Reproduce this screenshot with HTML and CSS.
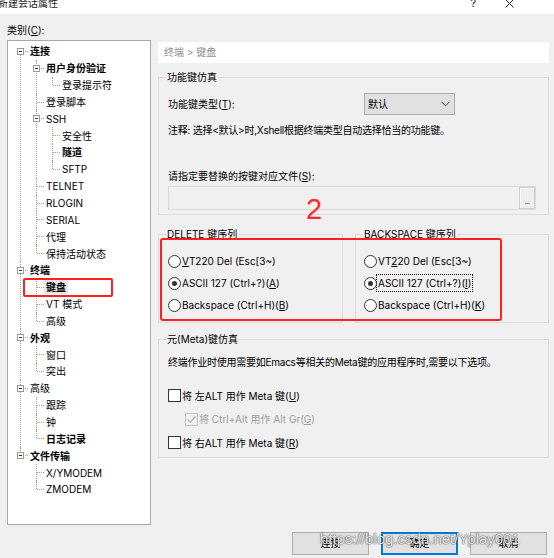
FILE: index.html
```html
<!DOCTYPE html>
<html lang="zh-CN">
<head>
<meta charset="utf-8">
<title>新建会话属性</title>
<link rel="stylesheet" href="styles.css">
</head>
<body>
<div class="titlebar">
  <span class="title">新建会话属性</span>
  <div class="ctrls">
    <span class="help">?</span>
    <svg class="close" width="9" height="9" viewBox="0 0 9 9"><path d="M0.5 0.5 L8.5 8.5 M8.5 0.5 L0.5 8.5" stroke="#222" stroke-width="1" fill="none"/></svg>
  </div>
</div>
<div class="main">
  <div class="leftcol">
    <div class="cat-label">类别(<u>C</u>):</div>
    <div class="tree">
      <ul class="root">
        <li><div class="row"><span class="box"></span><span class="lbl b">连接</span></div>
          <ul>
            <li><div class="row"><span class="box"></span><span class="lbl b">用户身份验证</span></div>
              <ul><li><div class="row"><span class="lbl">登录提示符</span></div></li></ul>
            </li>
            <li><div class="row"><span class="lbl">登录脚本</span></div></li>
            <li><div class="row"><span class="box"></span><span class="lbl">SSH</span></div>
              <ul>
                <li><div class="row"><span class="lbl">安全性</span></div></li>
                <li><div class="row"><span class="lbl b">隧道</span></div></li>
                <li><div class="row"><span class="lbl">SFTP</span></div></li>
              </ul>
            </li>
            <li><div class="row"><span class="lbl">TELNET</span></div></li>
            <li><div class="row"><span class="lbl">RLOGIN</span></div></li>
            <li><div class="row"><span class="lbl">SERIAL</span></div></li>
            <li><div class="row"><span class="lbl">代理</span></div></li>
            <li><div class="row"><span class="lbl">保持活动状态</span></div></li>
          </ul>
        </li>
        <li><div class="row"><span class="box"></span><span class="lbl b">终端</span></div>
          <ul>
            <li><div class="row"><span class="lbl b sel">键盘</span></div></li>
            <li><div class="row"><span class="lbl">VT 模式</span></div></li>
            <li><div class="row"><span class="lbl">高级</span></div></li>
          </ul>
        </li>
        <li><div class="row"><span class="box"></span><span class="lbl b">外观</span></div>
          <ul>
            <li><div class="row"><span class="lbl">窗口</span></div></li>
            <li><div class="row"><span class="lbl">突出</span></div></li>
          </ul>
        </li>
        <li><div class="row"><span class="box"></span><span class="lbl">高级</span></div>
          <ul>
            <li><div class="row"><span class="lbl">跟踪</span></div></li>
            <li><div class="row"><span class="lbl">钟</span></div></li>
            <li><div class="row"><span class="lbl b">日志记录</span></div></li>
          </ul>
        </li>
        <li><div class="row"><span class="box"></span><span class="lbl b">文件传输</span></div>
          <ul>
            <li><div class="row"><span class="lbl">X/YMODEM</span></div></li>
            <li><div class="row"><span class="lbl">ZMODEM</span></div></li>
          </ul>
        </li>
      </ul>
      <div class="mark-tree"></div>
    </div>
  </div>

  <div class="rightcol">
    <div class="crumb">终端 &gt; 键盘</div>

    <div class="group g-func">
      <span class="group-title">功能键仿真</span>
      <div class="type-row">
        <span class="type-label">功能键类型(<u>T</u>):</span>
        <div class="select"><span>默认</span>
          <svg width="9" height="6" viewBox="0 0 9 6"><path d="M0.5 0.8 L4.5 4.8 L8.5 0.8" stroke="#444" stroke-width="1" fill="none"/></svg>
        </div>
      </div>
      <div class="note">注释: 选择&lt;默认&gt;时,Xshell根据终端类型自动选择恰当的功能键。</div>
      <div class="file-label">请指定要替换的按键对应文件(<u>S</u>):</div>
      <div class="file-input"><span class="browse">...</span></div>
    </div>

    <div class="group-row">
      <div class="group g-del">
        <span class="group-title">DELETE 键序列</span>
        <div class="opt"><span class="radio"></span><span><u>V</u>T220 Del (Esc[3~)</span></div>
        <div class="opt"><span class="radio on"></span><span>ASCII 127 (Ctrl+?)(<u>A</u>)</span></div>
        <div class="opt"><span class="radio"></span><span>Backspace (Ctrl+H)(<u>B</u>)</span></div>
      </div>
      <div class="group g-bs">
        <span class="group-title">BACKSPACE 键序列</span>
        <div class="opt"><span class="radio"></span><span>VT<u>2</u>20 Del (Esc[3~)</span></div>
        <div class="opt"><span class="radio on"></span><span class="focus">ASCII 127 (Ctrl+?)(<u>I</u>)</span></div>
        <div class="opt"><span class="radio"></span><span>Backspace (Ctrl+H)(<u>K</u>)</span></div>
      </div>
    </div>

    <div class="group g-meta">
      <span class="group-title">元(Meta)键仿真</span>
      <div class="note">终端作业时使用需要如Emacs等相关的Meta键的应用程序时,需要以下选项。</div>
      <div class="checks">
        <div class="chk-row"><span class="chk"></span><span>将 左ALT 用作 Meta 键(<u>U</u>)</span></div>
        <div class="chk-row sub disabled"><span class="chk">
          <svg width="11" height="11" viewBox="0 0 11 11"><path d="M1.5 5.5 L4.2 8.2 L9.5 2.5" stroke="#b0b0b0" stroke-width="1.2" fill="none"/></svg>
        </span><span>将 Ctrl+Alt 用作 Alt Gr(<u>G</u>)</span></div>
        <div class="chk-row"><span class="chk"></span><span>将 右ALT 用作 Meta 键(<u>R</u>)</span></div>
      </div>
    </div>

    <div class="btns">
      <div class="btn">连接</div>
      <div class="btn default">确定</div>
      <div class="btn">取消</div>
    </div>
  </div>
</div>

<div class="mark-opts"></div>
<div class="mark-num">2</div>
<div class="watermark">https://blog.csdn.net/Yplay001</div>
</body>
</html>
```

FILE: styles.css
```css
html, body {
  margin: 0;
  padding: 0;
}
body {
  width: 554px;
  height: 558px;
  overflow: hidden;
  position: relative;
  background: #f0f0f0;
  color: #000;
  font-family: "Inter", "Noto Sans CJK SC", sans-serif;
  font-size: 10px;
}
u { text-decoration: underline; text-underline-offset: 1px; }

/* title bar */
.titlebar {
  height: 14px;
  background: #fff;
  display: flex;
  overflow: hidden;
}
.title {
  margin-left: -2px;
  margin-top: -4px;
  line-height: 14px;
  color: #222;
}
.ctrls {
  margin-left: auto;
  margin-right: 40px;
  display: flex;
  gap: 29px;
}
.help {
  margin-top: -4px;
  line-height: 14px;
  font-size: 11px;
  color: #222;
}
.close { margin-top: -1px; }

/* main */
.main {
  display: flex;
  padding: 9px 0 0 7px;
}
.leftcol { width: 144px; }
.cat-label {
  height: 14px;
  line-height: 14px;
}
.tree {
  margin-top: 3px;
  width: 144px;
  height: 485px;
  box-sizing: border-box;
  border: 1px solid #a9a9a9;
  background: #fff;
  padding-top: 2px;
  position: relative;
}
.tree ul {
  list-style: none;
  margin: 0;
  padding: 0;
}
.tree .root { margin-left: 12px; }
.tree li ul { margin-left: 6px; }
.tree li {
  position: relative;
  padding-left: 10px;
}
.tree li::before {
  content: "";
  position: absolute;
  left: 1px;
  top: 8px;
  width: 7px;
  border-top: 1px dotted #a0a0a0;
}
.tree li::after {
  content: "";
  position: absolute;
  left: 0;
  top: 0;
  bottom: 0;
  border-left: 1px dotted #a0a0a0;
}
.tree li:last-child::after {
  bottom: auto;
  height: 8px;
}
.tree .root > li:first-child::after { top: 9px; }
.row {
  height: 16.85px;
  display: flex;
  align-items: center;
}
.lbl { line-height: 14px; white-space: nowrap; }
.lbl.b { font-weight: bold; }
.lbl.sel {
  background: #e6e6e6;
  padding: 0 2px;
  margin-left: -2px;
}
.box {
  position: absolute;
  left: -3px;
  top: 5px;
  width: 5px;
  height: 5px;
  border: 1px solid #9a9a9a;
  background: #fff;
  z-index: 1;
}
.box::after {
  content: "";
  position: absolute;
  left: 1px;
  top: 2px;
  width: 3px;
  height: 1px;
  background: #333;
}
.mark-tree {
  position: absolute;
  left: 15px;
  top: 237px;
  width: 90px;
  height: 19px;
  box-sizing: border-box;
  border: 2px solid #ff2020;
  border-radius: 2px;
}

/* right column */
.rightcol {
  width: 391px;
  margin-left: 7px;
  margin-top: 19px;
}
.crumb {
  height: 21px;
  line-height: 21px;
  background: #fff;
  padding-left: 6px;
  color: #8f8f8f;
}
.group {
  position: relative;
  border: 1px solid #dcdcdc;
  box-sizing: border-box;
}
.group-title {
  position: absolute;
  top: -8px;
  left: 7px;
  padding: 0 1px;
  line-height: 14px;
  background: #f0f0f0;
  white-space: nowrap;
}
.g-func {
  margin-top: 14px;
  height: 138px;
  padding: 15px 12px 0 9px;
}
.type-row {
  display: flex;
  align-items: center;
  height: 22px;
}
.type-label {
  width: 196px;
  line-height: 14px;
}
.select {
  width: 91px;
  height: 22px;
  box-sizing: border-box;
  border: 1px solid #adadad;
  background: #e1e1e1;
  display: flex;
  align-items: center;
  justify-content: space-between;
  padding: 0 4px 0 3px;
  line-height: 14px;
}
.note {
  margin-top: 8px;
  line-height: 14px;
  white-space: nowrap;
  letter-spacing: -0.25px;
}
.file-label {
  margin-top: 32px;
  line-height: 14px;
}
.file-input {
  margin-top: 3px;
  height: 24px;
  box-sizing: border-box;
  border: 1px solid #d9d9d9;
  background: #f0f0f0;
  display: flex;
  justify-content: flex-end;
}
.browse {
  width: 16px;
  height: 22px;
  box-sizing: border-box;
  border: 1px solid #cfcfcf;
  box-shadow: inset 1px 1px 0 #fafafa;
  background: #eeeeee;
  color: #777;
  font-size: 9px;
  line-height: 26px;
  text-align: center;
  letter-spacing: -1px;
}

.group-row {
  display: flex;
  gap: 12px;
  margin-top: 19px;
}
.g-del, .g-bs {
  height: 89px;
  padding-top: 15px;
}
.g-del { width: 185px; padding-left: 9px; }
.g-bs { width: 194px; padding-left: 8px; }
.opt {
  height: 22px;
  display: flex;
  align-items: center;
  white-space: nowrap;
  line-height: 14px;
}
.radio {
  width: 13px;
  height: 13px;
  box-sizing: border-box;
  border: 1px solid #333;
  border-radius: 50%;
  background: #fff;
  margin-right: 1px;
  position: relative;
  flex: none;
}
.radio.on::after {
  content: "";
  position: absolute;
  left: 3px;
  top: 3px;
  width: 5px;
  height: 5px;
  border-radius: 50%;
  background: #333;
}
.focus {
  outline: 1px dotted #000;
  outline-offset: 1px;
}

.g-meta {
  margin-top: 16px;
  height: 119px;
  padding: 15px 0 0 9px;
}
.g-meta .note { margin-top: 0; }
.checks { margin-top: 15px; }
.chk-row {
  height: 23.5px;
  display: flex;
  align-items: center;
  white-space: nowrap;
  line-height: 14px;
}
.chk {
  width: 13px;
  height: 13px;
  box-sizing: border-box;
  border: 1px solid #333;
  background: #fff;
  margin-right: 1px;
  flex: none;
  display: flex;
}
.chk-row.sub { padding-left: 17px; }
.chk-row.disabled { color: #a0a0a0; }
.chk-row.disabled .chk {
  border-color: #c4c4c4;
  background: #f0f0f0;
}

.btns {
  display: flex;
  justify-content: flex-end;
  gap: 12px;
  margin-top: 74px;
  padding-right: 2px;
}
.btn {
  width: 77px;
  height: 23px;
  box-sizing: border-box;
  border: 1px solid #adadad;
  background: #e1e1e1;
  line-height: 21px;
  text-align: center;
}
.btn.default {
  border: 2px solid #0078d7;
  line-height: 19px;
}

/* annotations over the screenshot */
.mark-opts {
  position: absolute;
  left: 160px;
  top: 238px;
  width: 342px;
  height: 83px;
  box-sizing: border-box;
  border: 2px solid #ff2020;
  border-radius: 3px;
}
.mark-num {
  position: absolute;
  left: 306px;
  top: 195px;
  font-family: "Liberation Sans", sans-serif;
  font-size: 29px;
  line-height: 29px;
  color: #ff2a2a;
}
.watermark {
  position: absolute;
  left: 320px;
  top: 530px;
  font-family: "Liberation Sans", sans-serif;
  font-size: 15px;
  line-height: 18px;
  color: rgba(255, 255, 255, 0.9);
  text-shadow: 0 0 1px rgba(0, 0, 0, 0.8), 0 0 2px rgba(0, 0, 0, 0.4);
  white-space: nowrap;
}
```
